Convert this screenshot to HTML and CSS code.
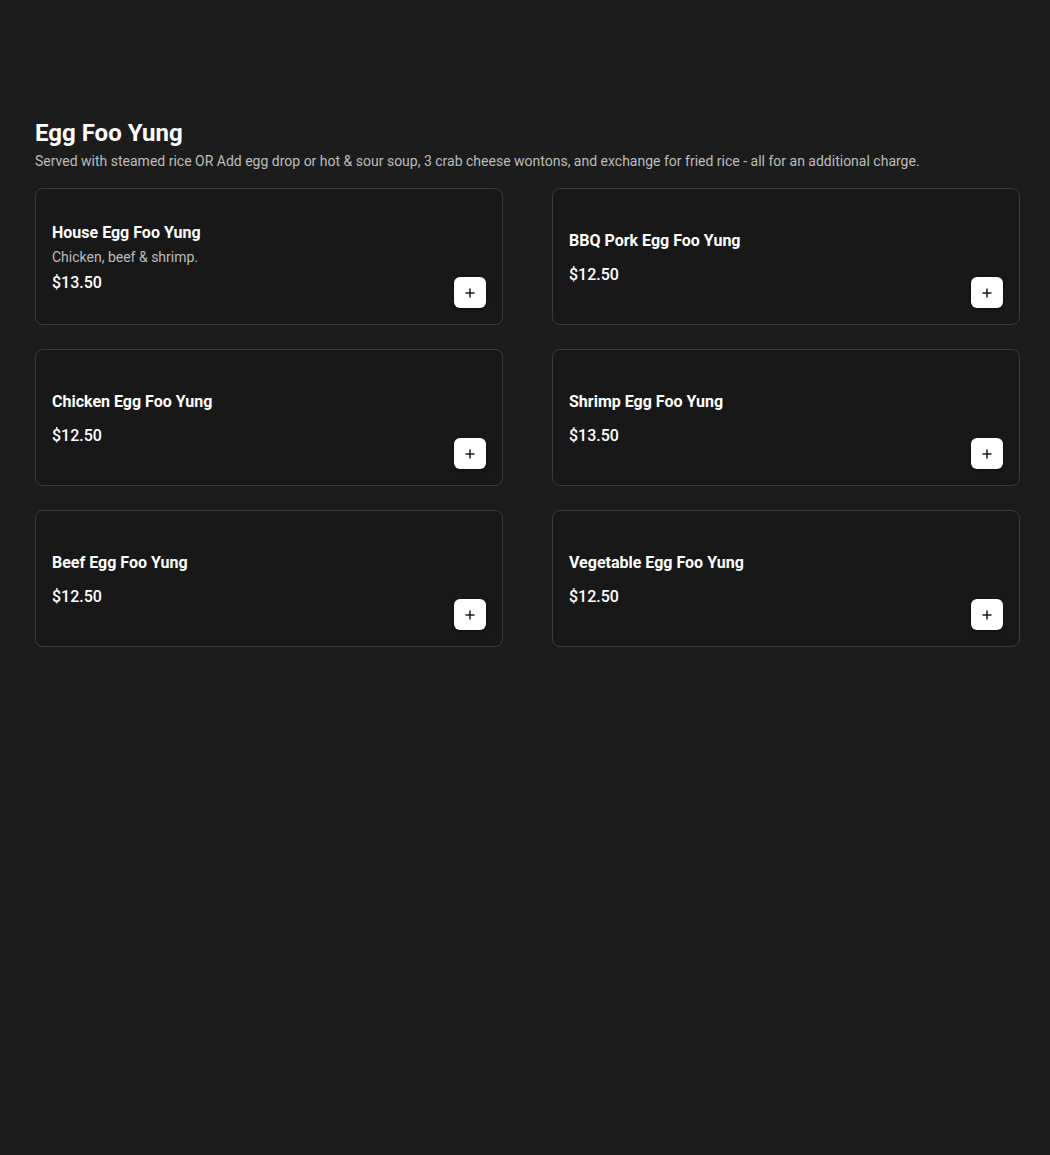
FILE: index.html
```html
<!DOCTYPE html>
<html lang="en">
<head>
<meta charset="utf-8">
<title>Egg Foo Yung</title>
<link rel="stylesheet" href="styles.css">
</head>
<body>
<main class="page">
  <section class="category">
    <h2 class="cat-title">Egg Foo Yung</h2>
    <p class="cat-desc">Served with steamed rice OR Add egg drop or hot &amp; sour soup, 3 crab cheese wontons, and exchange for fried rice - all for an additional charge.</p>
    <div class="grid">
      <div class="card">
        <div class="info">
          <div class="name">House Egg Foo Yung</div>
          <div class="desc">Chicken, beef &amp; shrimp.</div>
          <div class="price">$13.50</div>
        </div>
        <button class="add" aria-label="Add"><svg viewBox="0 0 12 12" width="12" height="12"><path d="M6 1.5v9M1.5 6h9" stroke="#1c1c1c" stroke-width="1.5" fill="none"/></svg></button>
      </div>
      <div class="card">
        <div class="info">
          <div class="name">BBQ Pork Egg Foo Yung</div>
          <div class="price">$12.50</div>
        </div>
        <button class="add" aria-label="Add"><svg viewBox="0 0 12 12" width="12" height="12"><path d="M6 1.5v9M1.5 6h9" stroke="#1c1c1c" stroke-width="1.5" fill="none"/></svg></button>
      </div>
      <div class="card">
        <div class="info">
          <div class="name">Chicken Egg Foo Yung</div>
          <div class="price">$12.50</div>
        </div>
        <button class="add" aria-label="Add"><svg viewBox="0 0 12 12" width="12" height="12"><path d="M6 1.5v9M1.5 6h9" stroke="#1c1c1c" stroke-width="1.5" fill="none"/></svg></button>
      </div>
      <div class="card">
        <div class="info">
          <div class="name">Shrimp Egg Foo Yung</div>
          <div class="price">$13.50</div>
        </div>
        <button class="add" aria-label="Add"><svg viewBox="0 0 12 12" width="12" height="12"><path d="M6 1.5v9M1.5 6h9" stroke="#1c1c1c" stroke-width="1.5" fill="none"/></svg></button>
      </div>
      <div class="card">
        <div class="info">
          <div class="name">Beef Egg Foo Yung</div>
          <div class="price">$12.50</div>
        </div>
        <button class="add" aria-label="Add"><svg viewBox="0 0 12 12" width="12" height="12"><path d="M6 1.5v9M1.5 6h9" stroke="#1c1c1c" stroke-width="1.5" fill="none"/></svg></button>
      </div>
      <div class="card">
        <div class="info">
          <div class="name">Vegetable Egg Foo Yung</div>
          <div class="price">$12.50</div>
        </div>
        <button class="add" aria-label="Add"><svg viewBox="0 0 12 12" width="12" height="12"><path d="M6 1.5v9M1.5 6h9" stroke="#1c1c1c" stroke-width="1.5" fill="none"/></svg></button>
      </div>
    </div>
  </section>
</main>
</body>
</html>
```
FILE: styles.css
```css
html, body {
  margin: 0;
  padding: 0;
  background: #1c1c1c;
  color: #ffffff;
  font-family: Roboto, "Liberation Sans", Arial, sans-serif;
}
.page {
  padding: 117px 29px 40px 35px;
  min-height: 1155px;
  box-sizing: border-box;
}
.cat-title {
  margin: 0;
  font-size: 24px;
  line-height: 32px;
  font-weight: 700;
  color: #ffffff;
}
.cat-desc {
  margin: 2px 0 0;
  font-size: 14px;
  line-height: 20px;
  color: #bdbdbd;
}
.grid {
  margin-top: 17px;
  display: grid;
  grid-template-columns: 468px 468px;
  column-gap: 49px;
  row-gap: 24px;
}
.card {
  box-sizing: border-box;
  height: 137px;
  border: 1px solid #3b3b3b;
  border-radius: 8px;
  background: #181818;
  padding: 16px;
  display: flex;
  justify-content: space-between;
  align-items: flex-end;
}
.info {
  align-self: center;
  margin-top: 2px;
  display: flex;
  flex-direction: column;
}
.name {
  font-size: 16px;
  line-height: 24px;
  font-weight: 700;
  color: #ffffff;
}
.desc {
  margin-top: 2px;
  font-size: 14px;
  line-height: 20px;
  color: #bdbdbd;
}
.price {
  margin-top: 10px;
  font-size: 16px;
  line-height: 24px;
  font-weight: 500;
  color: #ffffff;
}
.desc + .price {
  margin-top: 4px;
}
.add {
  width: 32px;
  height: 31px;
  padding: 0;
  border: none;
  border-radius: 6px;
  background: #ffffff;
  box-shadow: 0 1px 3px rgba(0,0,0,0.5);
  display: flex;
  align-items: center;
  justify-content: center;
  cursor: pointer;
}
.add svg {
  display: block;
}
```
